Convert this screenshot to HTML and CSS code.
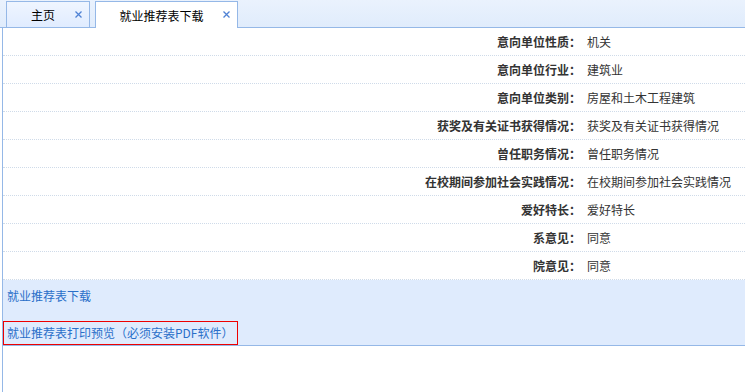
FILE: index.html
```html
<!DOCTYPE html>
<html lang="zh-CN">
<head>
    <meta charset="UTF-8">
    <title>就业推荐表下载</title>
    <link rel="stylesheet" href="styles.css">
</head>
<body>
    <!-- Tabs -->
    <div class="tabs">
        <ul>
            <li class="tab tab-home">
                <span class="tab-title">主页</span>
                <span class="tab-close"><svg width="7" height="7" viewBox="0 0 7 7"><path d="M0.5 0.5L6.5 6.5M6.5 0.5L0.5 6.5" stroke="#4f82d4" stroke-width="1.3"/></svg></span>
            </li>
            <li class="tab tab-selected">
                <span class="tab-title">就业推荐表下载</span>
                <span class="tab-close"><svg width="7" height="7" viewBox="0 0 7 7"><path d="M0.5 0.5L6.5 6.5M6.5 0.5L0.5 6.5" stroke="#4f82d4" stroke-width="1.3"/></svg></span>
            </li>
        </ul>
    </div>

    <!-- Panel -->
    <div class="panel">
        <div class="info">
            <div class="row"><div class="label">意向单位性质<span class="colon">：</span></div><div class="value">机关</div></div>
            <div class="row"><div class="label">意向单位行业<span class="colon">：</span></div><div class="value">建筑业</div></div>
            <div class="row"><div class="label">意向单位类别<span class="colon">：</span></div><div class="value">房屋和土木工程建筑</div></div>
            <div class="row"><div class="label">获奖及有关证书获得情况<span class="colon">：</span></div><div class="value">获奖及有关证书获得情况</div></div>
            <div class="row"><div class="label">曾任职务情况<span class="colon">：</span></div><div class="value">曾任职务情况</div></div>
            <div class="row"><div class="label">在校期间参加社会实践情况<span class="colon">：</span></div><div class="value">在校期间参加社会实践情况</div></div>
            <div class="row"><div class="label">爱好特长<span class="colon">：</span></div><div class="value">爱好特长</div></div>
            <div class="row"><div class="label">系意见<span class="colon">：</span></div><div class="value">同意</div></div>
            <div class="row"><div class="label">院意见<span class="colon">：</span></div><div class="value">同意</div></div>
        </div>

        <div class="actions">
            <a href="#" class="download">就业推荐表下载</a>
            <a href="#" class="preview">就业推荐表打印预览（必须安装PDF软件）</a>
        </div>
    </div>
</body>
</html>
```

FILE: styles.css
```css
/* Global */
body {
    margin: 0;
    font-family: "Noto Sans CJK SC", "Liberation Sans", sans-serif;
    font-size: 12px;
    color: #333;
    background-color: #fff;
    height: 392px;
    overflow: hidden;
}

/* Tabs */
.tabs {
    height: 27px;
    background: linear-gradient(#eaf2fd, #e0ecfc);
    border-bottom: 1px solid #95b8e7;
}

.tabs ul {
    list-style: none;
    margin: 0;
    padding: 1px 0 0 6px;
    display: flex;
    gap: 5px;
}

.tab {
    position: relative;
    height: 26px;
    box-sizing: border-box;
    padding: 0 20px 0 10px;
    border: 1px solid #95b8e7;
    border-bottom: none;
    background: linear-gradient(#eff5ff, #e0ecff);
    display: flex;
    align-items: center;
    justify-content: center;
    color: #000;
}

.tab-home {
    width: 84px;
}

.tab-selected {
    width: 143px;
    height: 27px;
    background: #fff;
}

.tab-close {
    position: absolute;
    right: 7px;
    top: 9px;
    line-height: 0;
}

/* Panel */
.panel {
    margin-left: 2px;
    border-left: 1px solid #95b8e7;
    height: 364px;
}

.row {
    display: grid;
    grid-template-columns: 578px 1fr;
    height: 27px;
    line-height: 27px;
    border-bottom: 1px dotted #cfdbe9;
}

.label {
    text-align: right;
    font-weight: bold;
    color: #333;
}

.colon {
    font-family: "Noto Sans CJK TC", sans-serif;
}

.value {
    padding-left: 6px;
    color: #333;
}

/* Actions */
.actions {
    background-color: #dfebfd;
    border-bottom: 1px solid #95b8e7;
    height: 66px;
    box-sizing: border-box;
    padding-top: 4px;
    display: flex;
    flex-direction: column;
    align-items: flex-start;
    gap: 13px;
}

.actions a {
    color: #2a6fc9;
    text-decoration: none;
    line-height: 24px;
}

.download {
    padding-left: 4px;
}

.preview {
    border: 1px solid #e00;
    line-height: 22px !important;
    padding: 0 4px 0 3px;
}
```
